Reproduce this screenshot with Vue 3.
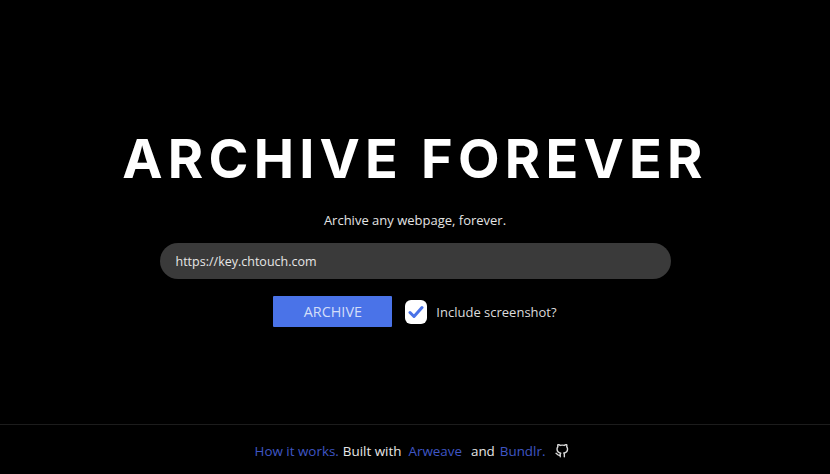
<script setup>
import { ref } from 'vue';

const url = ref('https://key.chtouch.com');
const includeScreenshot = ref(true);

const toggleScreenshot = () => {
  includeScreenshot.value = !includeScreenshot.value;
};
</script>

<template>
  <div class="page">
    <main class="hero">
      <h1 class="title">ARCHIVE FOREVER</h1>
      <p class="subtitle">Archive any webpage, forever.</p>
      <input v-model="url" class="url-input" type="text" />
      <div class="actions">
        <button class="archive-btn" type="button">ARCHIVE</button>
        <label class="check-label" @click.prevent="toggleScreenshot">
          <span class="check-box">
            <svg v-if="includeScreenshot" width="16" height="14" viewBox="0 0 16 14">
              <path d="M2 7.5 L6 11.5 L14 2.5" fill="none" stroke="#4a73e8" stroke-width="3" stroke-linecap="round" stroke-linejoin="round" />
            </svg>
          </span>
          Include screenshot?
        </label>
      </div>
    </main>
    <footer class="footer">
      <a class="link how">How it works.</a>
      <span class="plain">Built with</span>
      <a class="link">Arweave</a>
      <span class="plain and">and</span>
      <a class="link">Bundlr.</a>
      <svg class="github" width="14" height="14" viewBox="0 0 24 24" fill="none" stroke="#d8d8d8" stroke-width="2.4" stroke-linecap="round" stroke-linejoin="round">
        <path d="M9 19c-5 1.5-5-2.5-7-3m14 6v-3.87a3.37 3.37 0 0 0-.94-2.61c3.14-.35 6.44-1.54 6.44-7A5.44 5.44 0 0 0 20 4.77 5.07 5.07 0 0 0 19.91 1S18.73.65 16 2.48a13.38 13.38 0 0 0-7 0C6.27.65 5.09 1 5.09 1A5.07 5.07 0 0 0 5 4.77a5.44 5.44 0 0 0-1.5 3.78c0 5.42 3.3 6.61 6.44 7A3.37 3.37 0 0 0 9 18.13V22" />
      </svg>
    </footer>
  </div>
</template>

<style>
html,
body {
  margin: 0;
  background: #000;
}
</style>

<style scoped>
.page {
  height: 474px;
  display: flex;
  flex-direction: column;
  background: #000;
  font-family: "Open Sans", "Noto Sans", sans-serif;
  overflow: hidden;
}

.hero {
  flex: 1;
  display: flex;
  flex-direction: column;
  align-items: center;
  padding-top: 121px;
}

.title {
  margin: 0;
  color: #fff;
  font-family: Inter, "Open Sans", sans-serif;
  font-size: 54px;
  line-height: 75px;
  font-weight: 650;
  letter-spacing: 5.2px;
  white-space: nowrap;
}

.subtitle {
  margin: 15px 0 0;
  color: #e4e4e4;
  font-size: 13px;
  line-height: 18px;
}

.url-input {
  box-sizing: border-box;
  width: 511px;
  height: 36px;
  margin-top: 14px;
  padding: 0 16px;
  border: none;
  outline: none;
  border-radius: 18px;
  background: #3a3a3a;
  color: #e6e6e6;
  font-family: inherit;
  font-size: 12.5px;
}

.actions {
  display: flex;
  align-items: center;
  gap: 13px;
  margin-top: 17px;
}

.archive-btn {
  width: 119px;
  height: 31px;
  border: none;
  border-radius: 1px;
  background: #4a73e8;
  color: #d3def9;
  font-family: inherit;
  font-size: 14.4px;
}

.check-label {
  display: flex;
  align-items: center;
  gap: 9px;
  color: #dcdcdc;
  font-size: 13px;
}

.check-box {
  width: 22px;
  height: 24px;
  display: flex;
  align-items: center;
  justify-content: center;
  border-radius: 6px;
  background: #fff;
}

.footer {
  height: 50px;
  padding-top: 3px;
  box-sizing: border-box;
  border-top: 1px solid #1c1c1c;
  display: flex;
  align-items: center;
  justify-content: center;
  gap: 7px;
  font-size: 13.4px;
}

.link {
  color: #3f56c4;
}

.plain {
  color: #e6e6e6;
}

.how {
  margin-right: -3px;
}

.and {
  margin: 0 -2px 0 2px;
}

.github {
  margin-left: 3px;
  margin-right: 6px;
}
</style>
